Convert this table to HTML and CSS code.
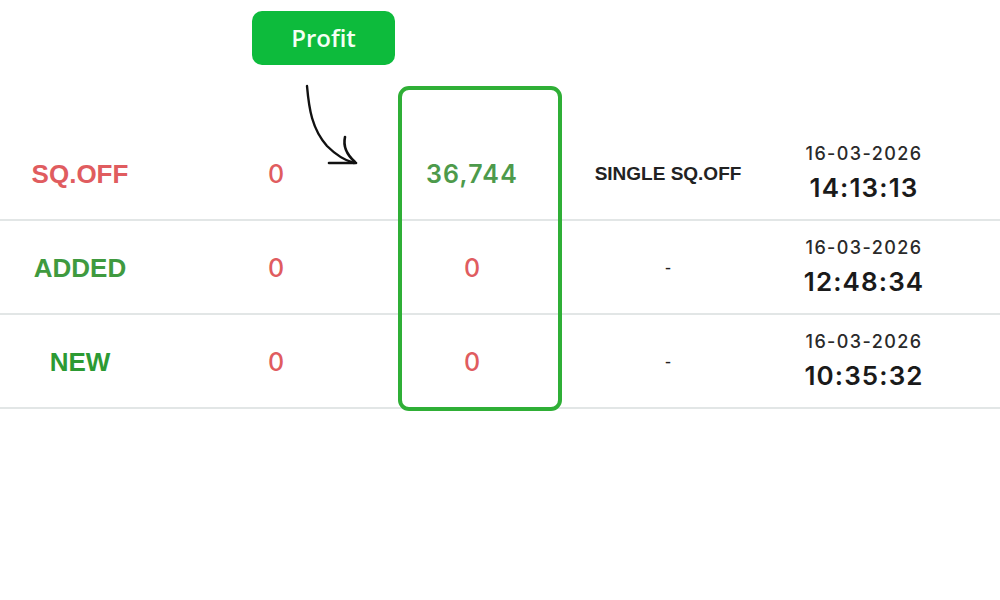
FILE: index.html
```html
<!DOCTYPE html>
<html>
<head>
<meta charset="utf-8">
<link rel="stylesheet" href="styles.css">
</head>
<body>
<div class="page">
  <div class="badge">Profit</div>
  <svg class="arrow" width="70" height="90" viewBox="0 0 70 90">
    <path d="M7 2 C 9 25, 12 45, 27 62 C 37 72, 47 77, 54 79" fill="none" stroke="#111" stroke-width="2.4" stroke-linecap="round"/>
    <path d="M29 79 L 56 79" fill="none" stroke="#111" stroke-width="2.6" stroke-linecap="round"/>
    <path d="M45 53 C 43 62, 46 70, 55 78" fill="none" stroke="#111" stroke-width="2.6" stroke-linecap="round"/>
  </svg>
  <div class="highlight"></div>

  <div class="table">
    <div class="row">
      <div class="cell status red">SQ.OFF</div>
      <div class="cell num red">0</div>
      <div class="cell num profit">36,744</div>
      <div class="cell reason">SINGLE SQ.OFF</div>
      <div class="cell stamp"><span class="date">16-03-2026</span><span class="time">14:13:13</span></div>
      <div class="cell"></div>
    </div>
    <div class="row">
      <div class="cell status green">ADDED</div>
      <div class="cell num red">0</div>
      <div class="cell num red">0</div>
      <div class="cell dash">-</div>
      <div class="cell stamp"><span class="date">16-03-2026</span><span class="time">12:48:34</span></div>
      <div class="cell"></div>
    </div>
    <div class="row">
      <div class="cell status green2">NEW</div>
      <div class="cell num red">0</div>
      <div class="cell num red">0</div>
      <div class="cell dash">-</div>
      <div class="cell stamp"><span class="date">16-03-2026</span><span class="time">10:35:32</span></div>
      <div class="cell"></div>
    </div>
  </div>
</div>
</body>
</html>
```

FILE: styles.css
```css
* { box-sizing: border-box; }
html, body { margin: 0; padding: 0; background: #fff; }
body { width: 1000px; height: 600px; overflow: hidden; }

.page {
  position: relative;
  width: 1000px;
  height: 600px;
  padding-top: 127px;
}

.table {
  margin-left: -18px;
  width: 1036px;
}

.row {
  display: grid;
  grid-template-columns: 196px 196px 196px 196px 196px 1fr;
  height: 94px;
  border-bottom: 2px solid #e2e6e6;
}

.cell {
  display: flex;
  align-items: center;
  justify-content: center;
}

.status {
  font-family: "Liberation Sans", Arial, sans-serif;
  font-weight: 700;
  font-size: 26px;
  padding-top: 2px;
}
.red { color: #e05c5f; }
.green { color: #3f9a3f; }
.green2 { color: #2c9a33; }

.num {
  font-family: "Inter", sans-serif;
  font-weight: 500;
  font-size: 25px;
  padding-top: 2px;
}
.profit { color: #4d9a4b; font-weight: 600; letter-spacing: 1.2px; }

.reason {
  font-family: "Liberation Sans", Arial, sans-serif;
  font-weight: 700;
  font-size: 19px;
  color: #222;
  padding-top: 2px;
}

.dash {
  font-family: "Liberation Sans", Arial, sans-serif;
  font-size: 18px;
  color: #222;
  padding-top: 2px;
}

.stamp {
  flex-direction: column;
  font-family: "Inter", sans-serif;
  color: #1a1a1a;
}
.date { font-size: 18px; font-weight: 500; line-height: 24px; color: #2a2a2a; letter-spacing: 1.4px; }
.time { font-size: 26px; font-weight: 600; line-height: 34px; margin-top: 5px; letter-spacing: 1.1px; }

.badge {
  position: absolute;
  left: 252px;
  top: 11px;
  width: 143px;
  height: 54px;
  border-radius: 10px;
  background: #0dbb3c;
  color: #f4fff4;
  font-family: "Open Sans", sans-serif;
  font-weight: 600;
  font-size: 24px;
  display: flex;
  align-items: center;
  justify-content: center;
  padding-bottom: 2px;
}

.arrow {
  position: absolute;
  left: 300px;
  top: 84px;
}

.highlight {
  position: absolute;
  left: 398px;
  top: 86px;
  width: 164px;
  height: 325px;
  border: 4px solid #2faf36;
  border-radius: 11px;
  z-index: 2;
}
```
